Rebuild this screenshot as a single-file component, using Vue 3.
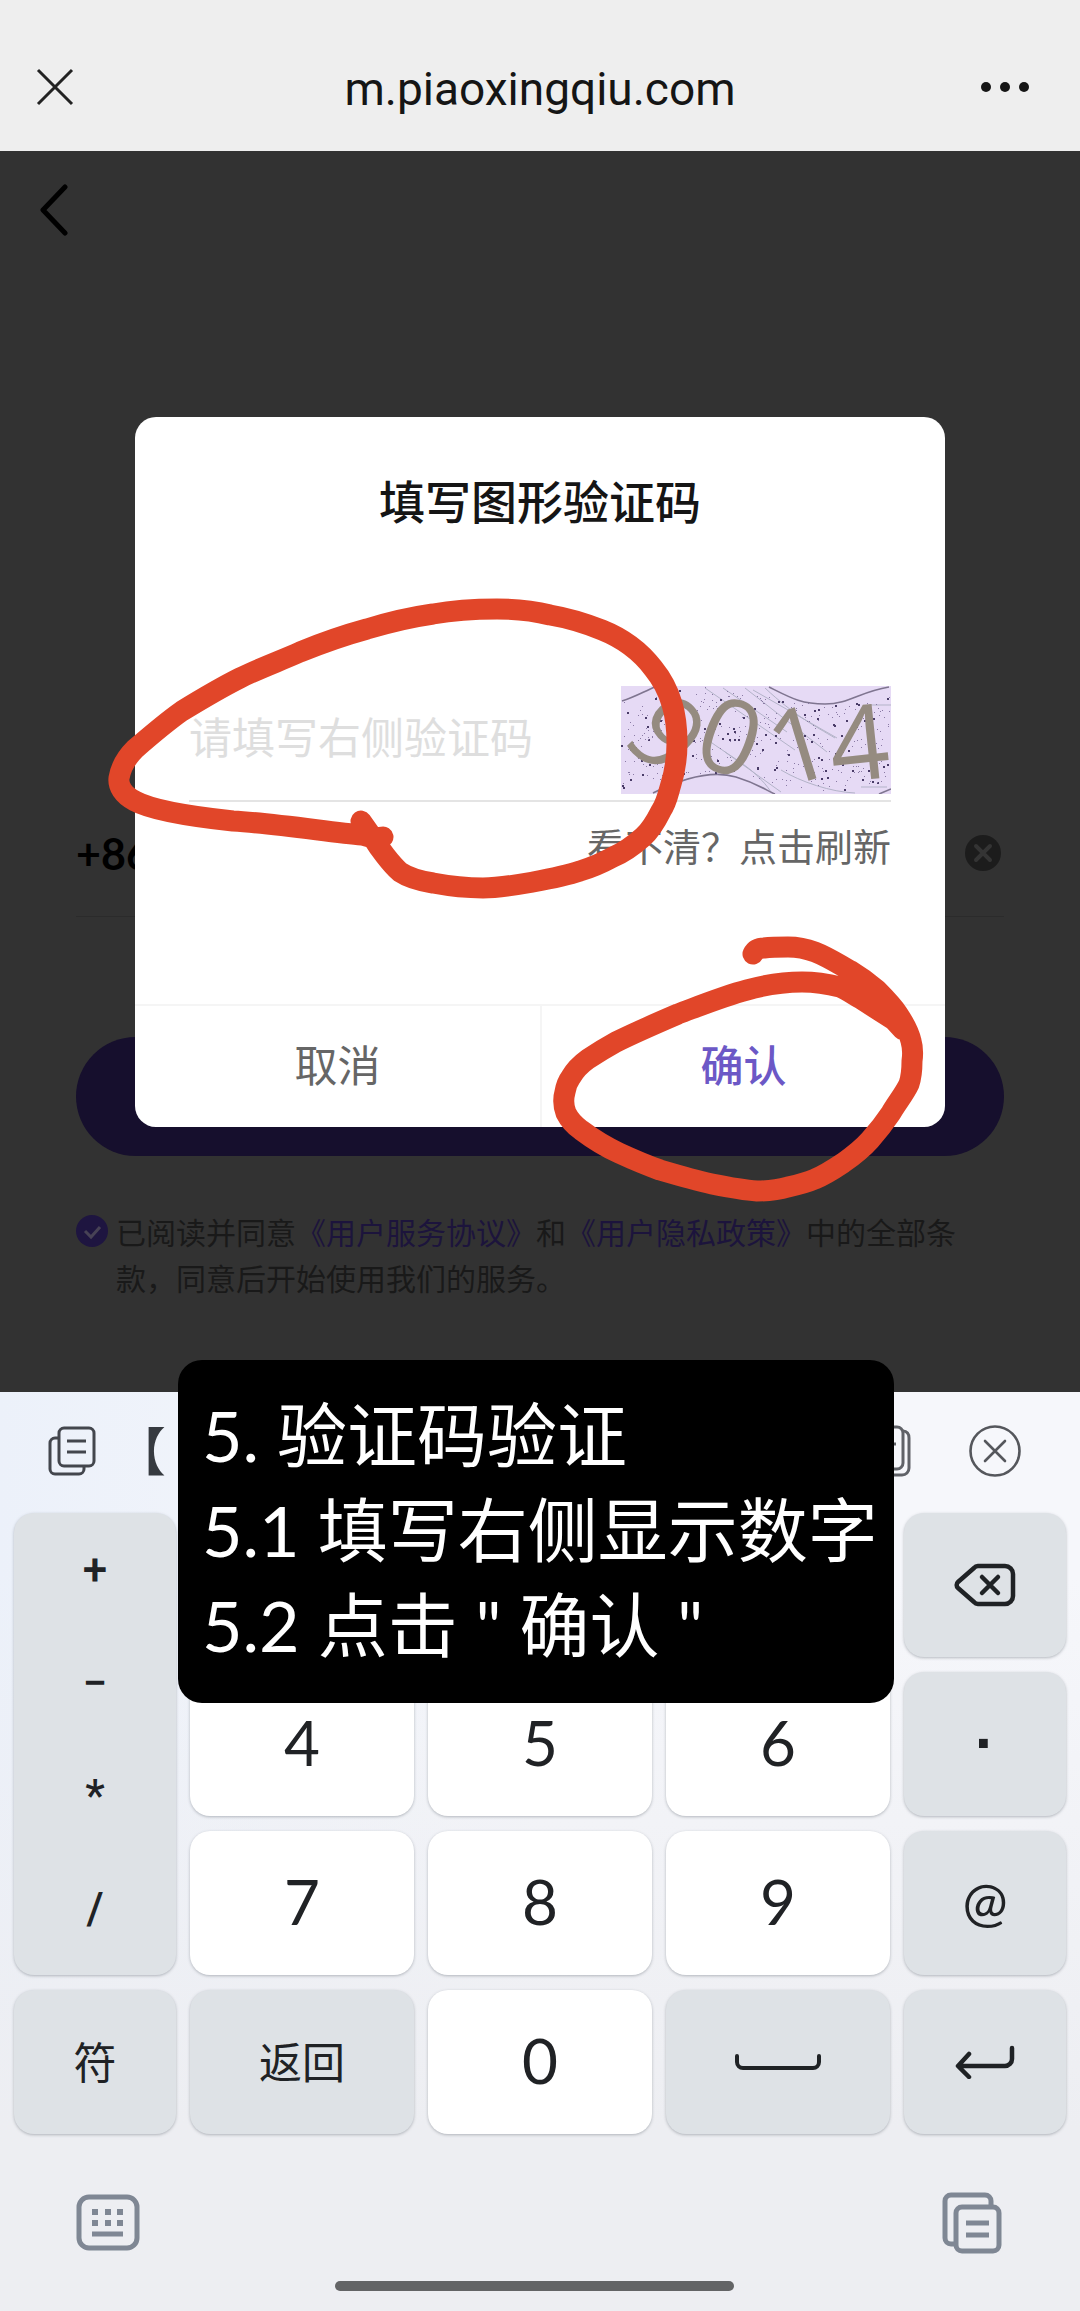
<script setup>
import { ref } from "vue";

const code = ref("");
const agreed = ref(true);

const operators = ["+", "−", "*", "/"];
const keys = ["1", "2", "3", "4", "5", "6", "7", "8", "9", "0"];

const digits = [
    { text: "9", x: 46, y: 48, angle: 46 },
    { text: "0", x: 109, y: 51, angle: 20 },
    { text: "1", x: 178, y: 59, angle: -17 },
    { text: "4", x: 238, y: 57, angle: -6 },
];

// noise for the captcha, same pattern every time
function makeNoise(count) {
    const dots = [];
    let seed = 9014;
    const next = () => {
        seed = (seed * 1103515245 + 12345) % 2147483648;
        return seed / 2147483648;
    };
    while (dots.length < count) {
        const x = Math.round(next() * 268);
        const y = Math.round(next() * 106);
        const wave = 9 - 9 * Math.cos(((x - 90) / 120) * Math.PI);
        if (y > wave && y < wave + 88) {
            dots.push({ x, y, size: next() > 0.8 ? 2 : 1 });
        }
    }
    return dots;
}
const noise = makeNoise(430);

function press(label) {
    code.value += label;
}
</script>

<template>
    <div class="screen">
        <header class="topbar">
            <button class="icon-button" aria-label="关闭">
                <svg width="38" height="38" viewBox="0 0 38 38">
                    <path d="M2 2l34 34M36 2L2 36" stroke="#222" stroke-width="3" fill="none" />
                </svg>
            </button>
            <h1>m.piaoxingqiu.com</h1>
            <button class="icon-button more" aria-label="更多">
                <svg width="50" height="12" viewBox="0 0 50 12">
                    <circle cx="6" cy="6" r="5" fill="#151515" />
                    <circle cx="25" cy="6" r="5" fill="#151515" />
                    <circle cx="44" cy="6" r="5" fill="#151515" />
                </svg>
            </button>
        </header>

        <main class="page">
            <button class="icon-button back" aria-label="返回">
                <svg width="34" height="52" viewBox="0 0 34 52">
                    <path d="M28 3L6 26l22 23" stroke="#000" stroke-width="5" fill="none" stroke-linecap="round" stroke-linejoin="round" />
                </svg>
            </button>
            <div class="login">
                <div class="phone">
                    <span>+86</span>
                    <button class="icon-button" aria-label="清除">
                        <svg width="42" height="36" viewBox="0 0 42 36">
                            <circle cx="21" cy="18" r="18" fill="#1c1c1c" />
                            <path d="M14 11l14 14M28 11L14 25" stroke="#343434" stroke-width="4" stroke-linecap="round" />
                        </svg>
                    </button>
                </div>
                <button class="submit" aria-label="登录"></button>
                <div class="agreement">
                    <span class="tick">
                        <input id="agree" v-model="agreed" type="checkbox" />
                        <svg v-if="agreed" viewBox="0 0 32 32">
                            <path d="M9 16l6 6 9-10" stroke="#474255" stroke-width="3" fill="none" />
                        </svg>
                    </span>
                    <label for="agree">已阅读并同意<a href="#">《用户服务协议》</a>和<a href="#">《用户隐私政策》</a>中的全部条款，同意后开始使用我们的服务。</label>
                </div>
            </div>

            <div class="mask">
                <section class="dialog" role="dialog">
                    <h2>填写图形验证码</h2>
                    <div class="code-row">
                        <input v-model="code" type="text" placeholder="请填写右侧验证码" aria-label="验证码" />
                        <button class="captcha" aria-label="图形验证码">
                            <svg viewBox="0 0 270 108">
                                <rect width="270" height="108" fill="#e6daf5" />
                                <path
                                    d="M84 2l90 62M102 2l64 44M124 2l82 64M132 4l84 48M144 2c30 28 50 38 70 50M84 52c30 22 50 30 66 54M104 66l56 40M160 84c20 12 50 22 74 23M248 19h22M240 101h26"
                                    stroke="#b3b3c8"
                                    fill="none"
                                />
                                <g stroke="#7f7590" stroke-width="1.6" fill="none">
                                    <path d="M1 15C14 11 24 5 34 1" />
                                    <path d="M32 107C62 92 92 84 115 91S146 105 154 108" />
                                    <path d="M148 1C170 12 180 18 204 18S238 6 268 1" />
                                    <path d="M258 108l12-5" />
                                </g>
                                <rect v-for="(dot, i) in noise" :key="i" :x="dot.x" :y="dot.y" :width="dot.size" :height="dot.size" :fill="dot.size == 2 ? '#4a3c68' : '#8a7aa5'" />
                                <text
                                    v-for="digit in digits"
                                    :key="digit.text"
                                    class="captcha-digit"
                                    :transform="`translate(${digit.x} ${digit.y}) rotate(${digit.angle})`"
                                    y="37"
                                >{{ digit.text }}</text>
                            </svg>
                        </button>
                    </div>
                    <button class="refresh">看不清？点击刷新</button>
                    <div class="actions">
                        <button>取消</button>
                        <button class="confirm">确认</button>
                    </div>
                </section>
            </div>
        </main>

        <section class="keyboard">
            <div class="toolbar">
                <button class="icon-button" aria-label="剪贴板">
                    <svg width="48" height="50" viewBox="0 0 48 50" fill="none" stroke="#43464d" stroke-width="3">
                        <rect x="11" y="2" width="35" height="38" rx="5" />
                        <path d="M11 12H7a5 5 0 0 0-5 5v26a5 5 0 0 0 5 5h24a5 5 0 0 0 5-5v-3" />
                        <path d="M19 15h19M19 26h19" />
                    </svg>
                </button>
                <span class="candidate">【</span>
                <button class="icon-button copies" aria-label="复制">
                    <svg width="50" height="52" viewBox="0 0 50 52" fill="none" stroke="#606268" stroke-width="3">
                        <rect x="2" y="2" width="40" height="42" rx="6" />
                        <path d="M42 6c4 0 6 3 6 7v30c0 4-3 7-7 7H12" />
                        <path d="M26 19h9" />
                    </svg>
                </button>
                <button class="icon-button" aria-label="收起">
                    <svg width="52" height="52" viewBox="0 0 52 52" fill="none" stroke="#55575c" stroke-width="2.6">
                        <circle cx="26" cy="26" r="24.5" />
                        <path d="M16 16l20 20M36 16L16 36" stroke-linecap="round" />
                    </svg>
                </button>
            </div>

            <div class="keys">
                <div class="operators">
                    <button v-for="op in operators" :key="op" @click="press(op)">{{ op }}</button>
                </div>
                <button v-for="key in keys" :key="key" class="key" :class="`n${key}`" @click="press(key)">{{ key }}</button>
                <button class="key gray delete" aria-label="删除">
                    <svg width="62" height="44" viewBox="0 0 62 44" fill="none" stroke="#1f2225" stroke-width="4.5" stroke-linecap="round" stroke-linejoin="round">
                        <path d="M24 3h27a8 8 0 0 1 8 8v22a8 8 0 0 1-8 8H24a6 6 0 0 1-4-2L4 25a4 4 0 0 1 0-6L20 5A6 6 0 0 1 24 3z" />
                        <path d="M28 14l16 16M44 14L28 30" />
                    </svg>
                </button>
                <button class="key gray dot" @click="press('.')">·</button>
                <button class="key gray at" @click="press('@')">@</button>
                <button class="key gray word symbol">符</button>
                <button class="key gray word return">返回</button>
                <button class="key gray space" aria-label="空格">
                    <svg width="88" height="18" viewBox="0 0 88 18" fill="none" stroke="#1f2225" stroke-width="4" stroke-linecap="round">
                        <path d="M3 3v6a6 6 0 0 0 6 6h70a6 6 0 0 0 6-6V3" />
                    </svg>
                </button>
                <button class="key gray enter" aria-label="换行">
                    <svg width="60" height="34" viewBox="0 0 60 34" fill="none" stroke="#1f2225" stroke-width="4.5" stroke-linecap="round" stroke-linejoin="round">
                        <path d="M57 3v11a7 7 0 0 1-7 7H4M14 9L3 21l11 11" />
                    </svg>
                </button>
            </div>

            <div class="bottom">
                <button class="icon-button" aria-label="键盘">
                    <svg width="64" height="60" viewBox="0 0 64 60" fill="none" stroke="#7f8794">
                        <rect x="3" y="4" width="58" height="51" rx="10" stroke-width="5" />
                        <path d="M16 19h6M29 19h6M41 19h6M16 30h6M29 30h6M41 30h6" stroke-width="6" />
                        <path d="M16 41h31" stroke-width="5" />
                    </svg>
                </button>
                <button class="icon-button" aria-label="剪贴板">
                    <svg width="60" height="62" viewBox="0 0 60 62" fill="none" stroke="#7f8794" stroke-width="5">
                        <rect x="14" y="15" width="43" height="44" rx="6" />
                        <path d="M49 15V9a6 6 0 0 0-6-6H9a6 6 0 0 0-6 6v37a6 6 0 0 0 6 6h5" />
                        <path d="M24 31h23M24 43h23" />
                    </svg>
                </button>
            </div>
            <div class="home-bar"></div>
        </section>

        <svg class="marks" viewBox="0 0 1080 2311" fill="none" stroke="#e14629" stroke-width="21" stroke-linecap="round" stroke-linejoin="round">
            <path
                d="M383 837C378 838 370 838 362 835C330 832 270 823 233 821C205 818 155 812 135 801C123 795 118 786 119 778C121 766 127 757 135 749
                C150 736 165 723 182 711C200 700 220 688 240 678C260 668 280 661 300 652C322 643 345 635 367 629C390 622 412 617 433 614C455 610 475 609 497 609
                C516 609 534 611 550 615C568 618 587 624 602 630C622 638 640 651 653 668C662 679 668 690 672 704C676 717 677 730 677 743C677 757 675 771 671 784
                C668 794 667 802 661 811C656 821 651 830 643 837C634 845 625 852 613 857C602 863 590 868 580 871C565 876 549 879 533 882C516 885 500 888 483 888
                C466 888 449 886 433 883C420 881 409 878 400 872C391 864 379 848 373 838L361 821"
            />
            <path
                d="M753 954C755 950 759 948 764 948C772 947 780 947 788 947C798 947 807 949 815 952C828 957 840 965 851 971C861 977 869 983 877 990
                C885 998 892 1005 898 1014C904 1023 909 1032 911 1041C913 1048 913 1054 912 1061C912 1070 911 1078 909 1084C905 1093 896 1104 891 1113
                C885 1122 878 1131 870 1140C862 1149 853 1156 843 1163C834 1169 825 1175 815 1179C806 1183 797 1185 788 1187C778 1190 768 1191 757 1191
                C743 1190 727 1187 712 1184C694 1180 677 1175 660 1170C646 1165 632 1159 619 1153C606 1147 593 1139 581 1130C574 1125 569 1119 566 1113
                C563 1105 563 1099 565 1092C566 1086 568 1081 571 1077C575 1070 581 1064 588 1059C597 1053 607 1047 616 1042C636 1032 657 1023 678 1014
                C702 1005 724 996 747 990C765 985 783 982 802 982C815 982 828 984 840 987C847 990 854 995 861 999L900 1024M900 1024L880 1004L850 985M903 1030L868 992"
            />
        </svg>

        <aside class="caption">
            <p>5. 验证码验证</p>
            <p>5.1 填写右侧显示数字</p>
            <p>5.2 点击 " 确认 "</p>
        </aside>
    </div>
</template>

<style>
body {
    margin: 0;
}
</style>

<style scoped>
.screen {
    position: relative;
    font-family: Lato, "Noto Sans CJK SC", sans-serif;
    background: #ecedf1;
}
button {
    padding: 0;
    border: none;
    background: none;
    font-family: inherit;
    color: inherit;
    cursor: pointer;
}
h1,
h2,
p {
    margin: 0;
    font-weight: 400;
}
svg {
    display: block;
}
.icon-button {
    flex: none;
}

/* browser bar */
.topbar {
    display: grid;
    grid-template-columns: 1fr auto 1fr;
    justify-items: start;
    align-items: center;
    height: 129px;
    padding: 22px 36px 0;
    background: #eee;
}
.topbar h1 {
    padding-top: 4px;
    font-family: Roboto, sans-serif;
    font-size: 46px;
    line-height: 60px;
    color: #151515;
}
.more {
    justify-self: end;
    margin-right: 14px;
}

/* dimmed login page */
.page {
    position: relative;
    padding: 33px 0 91px;
    background: #323232;
}
.back {
    display: block;
    margin-left: 37px;
}
.login {
    padding: 0 76px;
}
.phone {
    display: flex;
    align-items: center;
    justify-content: space-between;
    height: 126px;
    margin-top: 554px;
    border-bottom: 1px solid #2b2b2b;
    font-size: 43px;
    font-weight: 700;
    color: #000;
}
.submit {
    display: block;
    width: 100%;
    height: 119px;
    margin-top: 120px;
    border-radius: 60px;
    background: #160f2d;
}
.agreement {
    display: flex;
    gap: 8px;
    margin-top: 53px;
    padding-right: 40px;
    font-size: 30px;
    line-height: 46px;
    color: #191919;
}
.agreement a {
    color: #1c143c;
    text-decoration: none;
}
.tick {
    position: relative;
    flex: none;
    width: 32px;
    height: 46px;
}
.tick input {
    display: block;
    appearance: none;
    width: 32px;
    height: 32px;
    margin: 6px 0;
    border-radius: 50%;
    background: #1e1540;
}
.tick svg {
    position: absolute;
    top: 6px;
    left: 0;
    width: 32px;
    pointer-events: none;
}

/* captcha dialog */
.mask {
    position: absolute;
    inset: 0;
    display: flex;
    align-items: center;
    justify-content: center;
}
.dialog {
    width: 75%;
    padding-top: 56px;
    border-radius: 21px;
    background: #fff;
    overflow: hidden;
    box-sizing: border-box;
}
.dialog h2 {
    font-size: 46px;
    font-weight: 500;
    line-height: 58px;
    text-align: center;
    color: #151515;
}
.code-row {
    display: flex;
    align-items: center;
    margin: 155px 54px 0;
    padding-bottom: 6px;
    border-bottom: 2px solid #e4e4e4;
}
.code-row input {
    flex: 1;
    min-width: 0;
    padding: 0 0 4px;
    border: none;
    outline: none;
    font-family: inherit;
    font-size: 43px;
    line-height: 60px;
    color: #222;
}
.code-row input::placeholder {
    color: #dedede;
}
.captcha {
    width: 270px;
}
.captcha-digit {
    font-family: "Open Sans", sans-serif;
    font-size: 104px;
    text-anchor: middle;
    fill: #958b80;
}
.refresh {
    display: block;
    margin: 20px 54px 0 auto;
    font-size: 38px;
    line-height: 48px;
    color: #666;
}
.actions {
    display: grid;
    grid-template-columns: 1fr 1fr;
    margin-top: 134px;
    border-top: 2px solid #f5f5f5;
}
.actions button {
    height: 121px;
    padding-bottom: 6px;
    font-size: 43px;
    color: #666;
}
.actions .confirm {
    border-left: 2px solid #f5f5f5;
    font-weight: 500;
    color: #6c58c6;
}

/* keyboard */
.keyboard {
    padding-bottom: 20px;
    background: linear-gradient(to bottom, transparent 20%, #edeef2 80%), linear-gradient(to right, #ecf1fa, #f6f7fb 50%);
    color: #202225;
}
.toolbar {
    display: flex;
    align-items: center;
    height: 118px;
    padding: 0 59px 0 48px;
}
.candidate {
    flex: 1;
    margin-left: 18px;
    font-size: 52px;
    line-height: 60px;
    color: #363a40;
}
.copies {
    margin-right: 58px;
}
.keys {
    display: grid;
    grid-template-columns: 162fr 224fr 224fr 224fr 162fr;
    grid-template-rows: repeat(4, 144px);
    grid-template-areas:
        "op n1 n2 n3 delete"
        "op n4 n5 n6 dot"
        "op n7 n8 n9 at"
        "symbol return n0 space enter";
    gap: 15px 14px;
    padding: 3px 14px 0;
}
.key,
.operators {
    border-radius: 20px;
    background: #fff;
    box-shadow: 0 1px 3px rgba(60, 70, 80, 0.35);
}
.key {
    display: flex;
    align-items: center;
    justify-content: center;
    padding-bottom: 4px;
    font-size: 62px;
}
.operators,
.gray {
    background: #dee2e6;
}
.operators {
    grid-area: op;
    display: grid;
    padding-bottom: 10px;
}
.operators button {
    font-family: Roboto, sans-serif;
    font-size: 44px;
    font-weight: 500;
}
.n1 { grid-area: n1; }
.n2 { grid-area: n2; }
.n3 { grid-area: n3; }
.n4 { grid-area: n4; }
.n5 { grid-area: n5; }
.n6 { grid-area: n6; }
.n7 { grid-area: n7; }
.n8 { grid-area: n8; }
.n9 { grid-area: n9; }
.n0 { grid-area: n0; }
.delete {
    grid-area: delete;
    padding: 0;
}
.dot {
    grid-area: dot;
    font-family: "Liberation Sans", sans-serif;
    font-weight: 700;
}
.at {
    grid-area: at;
    font-size: 54px;
}
.symbol { grid-area: symbol; }
.return { grid-area: return; }
.space {
    grid-area: space;
    padding: 0;
}
.enter {
    grid-area: enter;
    padding: 0;
}
.word {
    font-size: 43px;
}
.bottom {
    display: flex;
    justify-content: space-between;
    padding: 58px 78px 0 76px;
}
.home-bar {
    width: 37%;
    height: 10px;
    margin: 27px 0 0 31%;
    border-radius: 5px;
    background: #636466;
}

/* tutorial overlay */
.marks {
    position: absolute;
    top: 0;
    left: 0;
    width: 100%;
    pointer-events: none;
}
.caption {
    position: absolute;
    top: 1360px;
    left: 178px;
    padding: 28px 16px 30px 24px;
    border-radius: 24px;
    background: #000;
    color: #fff;
    font-size: 70px;
    font-weight: 500;
    line-height: 95px;
    white-space: nowrap;
}
</style>
